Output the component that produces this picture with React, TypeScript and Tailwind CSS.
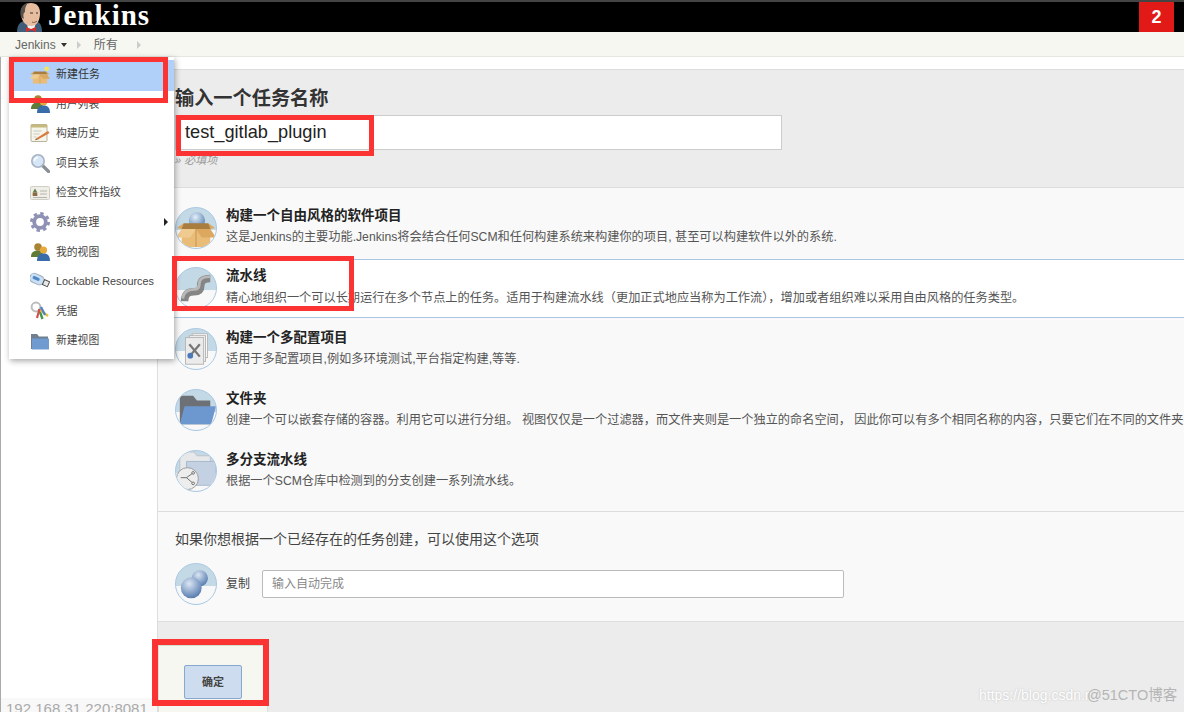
import type { ReactNode } from "react";

const FONT = "font-['Liberation_Sans','Noto_Sans_CJK_SC',sans-serif]";

const BoxIcon = ({ small }: { small?: boolean }) => (
  <svg viewBox="0 0 42 42" className="w-full h-full">
    {!small && (
      <>
        <defs>
          <radialGradient id="ball" cx="40%" cy="30%" r="70%">
            <stop offset="0" stopColor="#e4eef8" />
            <stop offset="1" stopColor="#5f88b8" />
          </radialGradient>
        </defs>
        <circle cx="22" cy="13" r="8.5" fill="url(#ball)" />
      </>
    )}
    {small && <circle cx="35" cy="10" r="5" fill="#f4e45f" />}
    <path d="M8 16h26l3 6H5z" fill="#a97c3f" />
    <path d="M6 22h30v19H6z" fill="#e9bc78" />
    <path d="M6 22L0 31h15l6-9z" fill="#f0cb90" />
    <path d="M36 22l6 9H27l-6-9z" fill="#dca75f" />
    <path d="M8 16L1 21l5 1zM34 16l7 5-5 1z" fill="#d9a860" />
    <path d="M21 22v19" stroke="#c8944c" />
  </svg>
);

const PeopleIcon = () => (
  <svg viewBox="0 0 20 20" className="w-full h-full">
    <circle cx="8" cy="5" r="3.8" fill="#a98434" />
    <path d="M1 15c0-5 3-6.5 7-6.5s5 2.5 5 6.5z" fill="#5f7b35" />
    <circle cx="13.5" cy="8" r="3.6" fill="#e7a83c" />
    <path d="M7 19c0-6 3-7.500 6.500-7.500S20 13 20 19z" fill="#3a6ca9" />
  </svg>
);

const HistoryIcon = () => (
  <svg viewBox="0 0 20 20" className="w-full h-full">
    <rect x="1" y="1.500" width="16" height="17" rx="1" fill="#f6f5ea" stroke="#b8b39a" />
    <rect x="1" y="1.500" width="16" height="3" fill="#c7b97d" />
    <path d="M3.500 8h8M3.500 11h6M3.500 14h3" stroke="#c9c9c9" />
    <path d="M6 15.500L18 8l1.500 2L8 16.500z" fill="#d9793f" />
    <path d="M6 15.500l2 1-3 .8z" fill="#7a5a38" />
  </svg>
);

const SearchIcon = () => (
  <svg viewBox="0 0 20 20" className="w-full h-full">
    <path d="M12.500 12.500l6 6" stroke="#8a8f96" strokeWidth="3.200" strokeLinecap="round" />
    <circle cx="8" cy="8" r="6.200" fill="#d7e6f6" stroke="#a5b4c4" strokeWidth="1.600" />
    <path d="M4.500 8a3.500 3.500 0 0 1 3.500-3.500" stroke="#fff" strokeWidth="1.400" fill="none" />
  </svg>
);

const FingerprintIcon = () => (
  <svg viewBox="0 0 20 20" className="w-full h-full">
    <rect x="0.500" y="3.500" width="19" height="13" rx="1" fill="#efeee7" stroke="#cfcfc8" />
    <path d="M5 5.500l2.300 4h-4.600z" fill="#5f7d45" />
    <rect x="2.700" y="9.500" width="4.600" height="3.500" fill="#8a6a3e" />
    <path d="M10 8h7M10 11h7M3 14.500h14" stroke="#b5b5ad" />
  </svg>
);

const GearIcon = () => (
  <svg viewBox="0 0 20 20" className="w-full h-full">
    <circle cx="10" cy="10" r="5.800" fill="none" stroke="#8f91b5" strokeWidth="3.800" />
    <circle
      cx="10"
      cy="10"
      r="8.600"
      fill="none"
      stroke="#8f91b5"
      strokeWidth="2.800"
      strokeDasharray="3.400 3.350"
    />
  </svg>
);

const UsbIcon = () => (
  <svg viewBox="0 0 22 20" className="w-full h-full">
    <g transform="rotate(24 11 10)">
      <rect x="-1" y="4.500" width="16" height="10" rx="4.500" fill="#c9dff3" stroke="#9aaabb" />
      <rect x="2" y="7.500" width="8" height="3.400" rx="1.400" fill="#4f87c9" />
      <rect x="15" y="6.500" width="6" height="6" fill="#e8e8e8" stroke="#444" />
    </g>
  </svg>
);

const KeysIcon = () => (
  <svg viewBox="0 0 20 20" className="w-full h-full">
    <circle cx="6" cy="6" r="4.400" fill="none" stroke="#bcbcbc" strokeWidth="2" />
    <path d="M9 8l3.500 10" stroke="#3f9a4b" strokeWidth="2.400" />
    <path d="M10 9l8 6" stroke="#e2c23b" strokeWidth="2.400" />
    <path d="M9.500 8L7 17" stroke="#d94c4c" strokeWidth="2.200" />
    <path d="M11 6l4 8" stroke="#4c7fd0" strokeWidth="2.200" />
  </svg>
);

const FolderIcon = () => (
  <svg viewBox="0 0 20 20" className="w-full h-full">
    <path d="M1 3h6l2 2.500h9V18H1z" fill="#6f7f90" />
    <path d="M2 7.500h17V18.500H2z" fill="#6f9bd1" />
  </svg>
);

const Disc = ({ children }: { children: ReactNode }) => (
  <div className="relative w-[42px] h-[42px] shrink-0 rounded-full border border-[#a8c8e4] overflow-hidden bg-[linear-gradient(#c4d9e6_0,#c4d9e6_55%,#f8f8f8_55%)]">
    {children}
  </div>
);

const PipeIcon = () => (
  <svg viewBox="0 0 42 42" className="w-full h-full">
    <path
      d="M9 35C9 27 13 25 19 25C25 25 26 22 26 18C26 13 30 11 36 11"
      fill="none"
      stroke="#858585"
      strokeWidth="8"
    />
    <path
      d="M7 32C8 25 13 22.500 19 22.500C24 22.500 24.500 19 24.500 16C24.500 11 30 9 36 9"
      fill="none"
      stroke="#b8b8b8"
      strokeWidth="3"
    />
  </svg>
);

const ConfigIcon = () => (
  <svg viewBox="0 0 42 42" className="w-full h-full">
    <rect x="17" y="5" width="16" height="25" fill="#fbfbfb" stroke="#b5b5b5" />
    <rect x="14" y="7" width="17" height="27" fill="#f5f5f5" stroke="#b5b5b5" />
    <rect x="10" y="9" width="19" height="28" fill="#ebebeb" stroke="#b5b5b5" />
    <path d="M14 16l11 13M25 16L14 29" stroke="#777" strokeWidth="2.400" />
    <circle cx="15" cy="28" r="3" fill="#4a78b8" />
  </svg>
);

const FolderDiscIcon = () => (
  <svg viewBox="0 0 42 42" className="w-full h-full">
    <path d="M4 6h14l4 5h14v25H4z" fill="#6d7074" />
    <path d="M9 17h33l-5 19H4z" fill="#6c98cf" />
  </svg>
);

const MultiBranchIcon = () => (
  <svg viewBox="0 0 42 42" className="w-full h-full">
    <path d="M4 1h15l3 4h14v26H4z" fill="#e6e8ea" stroke="#bcc2c8" />
    <path d="M11 11h31v25H11z" fill="#c3d1e2" stroke="#a5b7cb" />
    <circle cx="12" cy="29" r="11.500" fill="#ededed" stroke="#9b9b9b" />
    <path d="M5 28h6l7-5M11 28l7 6" fill="none" stroke="#6d6d6d" />
    <circle cx="18" cy="23" r="1.400" fill="#ededed" stroke="#6d6d6d" />
    <circle cx="18" cy="34" r="1.400" fill="#ededed" stroke="#6d6d6d" />
  </svg>
);

const SpheresIcon = () => (
  <svg viewBox="0 0 42 42" className="w-full h-full">
    <defs>
      <radialGradient id="sph" cx="40%" cy="30%" r="75%">
        <stop offset="0" stopColor="#dbe6f3" />
        <stop offset="1" stopColor="#5076ac" />
      </radialGradient>
    </defs>
    <circle cx="25" cy="15" r="8.500" fill="url(#sph)" />
    <circle cx="16" cy="25" r="11" fill="url(#sph)" />
  </svg>
);

const menu: { label: string; icon: ReactNode; arrow?: boolean }[] = [
  { label: "用户列表", icon: <PeopleIcon /> },
  { label: "构建历史", icon: <HistoryIcon /> },
  { label: "项目关系", icon: <SearchIcon /> },
  { label: "检查文件指纹", icon: <FingerprintIcon /> },
  { label: "系统管理", icon: <GearIcon />, arrow: true },
  { label: "我的视图", icon: <PeopleIcon /> },
  { label: "Lockable Resources", icon: <UsbIcon /> },
  { label: "凭据", icon: <KeysIcon /> },
  { label: "新建视图", icon: <FolderIcon /> },
];

const jobs: {
  title: string;
  desc: string;
  icon: ReactNode;
  selected?: boolean;
  row: string;
  text: string;
  gap: string;
}[] = [
  {
    title: "构建一个自由风格的软件项目",
    desc: "这是Jenkins的主要功能.Jenkins将会结合任何SCM和任何构建系统来构建你的项目, 甚至可以构建软件以外的系统.",
    icon: <BoxIcon />,
    row: "h-[71px] pt-[19px]",
    text: "mt-0",
    gap: "mt-[6px]",
  },
  {
    title: "流水线",
    desc: "精心地组织一个可以长期运行在多个节点上的任务。适用于构建流水线（更加正式地应当称为工作流），增加或者组织难以采用自由风格的任务类型。",
    icon: <PipeIcon />,
    selected: true,
    row: "h-[59px] pt-[7px]",
    text: "mt-0",
    gap: "mt-[7px]",
  },
  {
    title: "构建一个多配置项目",
    desc: "适用于多配置项目,例如多环境测试,平台指定构建,等等.",
    icon: <ConfigIcon />,
    row: "h-[61px] pt-[10px]",
    text: "mt-[1px]",
    gap: "mt-[6px]",
  },
  {
    title: "文件夹",
    desc: "创建一个可以嵌套存储的容器。利用它可以进行分组。 视图仅仅是一个过滤器，而文件夹则是一个独立的命名空间， 因此你可以有多个相同名称的内容，只要它们在不同的文件夹里即可。",
    icon: <FolderDiscIcon />,
    row: "h-[61px] pt-[10px]",
    text: "mt-[1px]",
    gap: "mt-[6px]",
  },
  {
    title: "多分支流水线",
    desc: "根据一个SCM仓库中检测到的分支创建一系列流水线。",
    icon: <MultiBranchIcon />,
    row: "h-[71px] pt-[10px]",
    text: "mt-[1px]",
    gap: "mt-[6px]",
  },
];

export default function App() {
  return (
    <div className={`relative w-[1184px] h-[712px] overflow-hidden bg-white text-[#333] ${FONT}`}>
      {/* header */}
      <div className="h-[32px] bg-black border-t-2 border-[#444] flex items-center justify-between pl-[15px] pr-[10px]">
        <div className="flex items-center gap-[3px]">
          <svg viewBox="0 0 30 30" className="w-[30px] h-[30px]">
            <path d="M2 30c0-8 4-11 9-11h7c6 0 9 3 9 11z" fill="#3f5c78" />
            <path d="M12 20h9l-2 8h-6z" fill="#f0f0f0" />
            <path d="M11 25l5 2 5-2v5l-5-2-5 2z" fill="#d12f2c" />
            <path d="M6 11C6 4 10 1 16 1s9 4 9 10c0 6-2 13-9 13-6 0-10-6-10-13z" fill="#e6bd9f" />
            <path d="M6 15C4 8 7 2 13 1c-3 3-3 7-3 9-2 1-2 4-1 7z" fill="#55504c" />
            <path d="M15 11h3M21 11h2" stroke="#333" strokeWidth="1.200" />
            <path d="M17 20c2 1 4 0 5-1" stroke="#8a5a48" fill="none" />
          </svg>
          <span className="font-['Liberation_Serif',serif] text-white text-[29px] font-bold leading-none tracking-[1px] -mt-[3px]">
            Jenkins
          </span>
        </div>
        <div className="w-[35px] h-[30px] bg-[#e11a17] text-white font-bold text-[18px] flex items-center justify-center">
          2
        </div>
      </div>

      {/* breadcrumb */}
      <div className="h-[25px] bg-[#f5f7f0] border-b border-[#e4e6df] flex items-center pt-[1px] pl-[15px] text-[12px] text-[#666]">
        <span>Jenkins</span>
        <span className="ml-[5px] border-x-[3.5px] border-x-transparent border-t-[4px] border-t-[#333]" />
        <span className="ml-[10px] border-y-[4px] border-y-transparent border-l-[4px] border-l-[#ccc]" />
        <span className="ml-[13px]">所有</span>
        <span className="ml-[19px] border-y-[4px] border-y-transparent border-l-[4px] border-l-[#ccc]" />
      </div>

      <div className="flex h-[655px]">
        {/* sidebar */}
        <div className="w-[158px] shrink-0 border-l border-[#aaa] border-r border-r-[#ddd] flex flex-col justify-end">
          <div className="h-[14px] overflow-hidden bg-[#f8f8f8] pl-[5px] pt-[2px] text-[15px] leading-[18px] text-[#aaa] whitespace-nowrap">
            192.168.31.220:8081
          </div>
        </div>

        {/* main */}
        <div className="flex-1 min-w-0 pt-[12px]">
          <div className="h-full bg-[#ececec] border-t border-[#ddd] flex flex-col">
            <div className="h-[117px] shrink-0 pl-[17px] pt-[17px]">
              <h1 className="text-[19.2px] leading-[23px] font-bold text-[#333]">输入一个任务名称</h1>
              <div className="mt-[5px] w-[607px] h-[35px] bg-white border border-[#ccc] pl-[9px] text-[18.2px] leading-[33px] text-[#222]">
                test_gitlab_plugin
              </div>
              <p className="mt-[3px] text-[11px] leading-[14px] italic text-[#999]">» 必填项</p>
            </div>

            <div className="h-[325px] shrink-0 bg-[#f9f9f9] border-y border-[#ddd] overflow-hidden">
              {jobs.map((job) => (
                <div
                  key={job.title}
                  className={`${job.row} flex items-start pl-[17px] whitespace-nowrap ${
                    job.selected ? "bg-white border-y border-[#a9c6e3]" : ""
                  }`}
                >
                  <Disc>{job.icon}</Disc>
                  <div className={`ml-[9px] ${job.text}`}>
                    <div className="text-[13.5px] leading-[17px] font-bold text-[#222]">{job.title}</div>
                    <div className={`${job.gap} text-[12.2px] leading-[15px] text-[#555]`}>{job.desc}</div>
                  </div>
                </div>
              ))}
            </div>

            <div className="h-[110px] shrink-0 bg-[#f9f9f9] border-b border-[#ddd] pl-[17px] pt-[18px]">
              <p className="text-[14px] leading-[18px] text-[#444]">如果你想根据一个已经存在的任务创建，可以使用这个选项</p>
              <div className="mt-[15px] flex items-center">
                <Disc>
                  <SpheresIcon />
                </Disc>
                <span className="ml-[9px] text-[12px] text-[#444]">复制</span>
                <div className="ml-[12px] w-[582px] h-[28px] bg-white border border-[#bbb] rounded-[2px] pl-[9px] text-[12px] leading-[26px] text-[#888]">
                  输入自动完成
                </div>
              </div>
            </div>

            <div className="flex-1 pt-[23px]">
              <div className="w-[110px] h-full bg-[#f5f7f0] border-t border-[#cfe0cf] border-x border-x-[#d8e4d8] pt-[19px] pl-[25px]">
                <button className="w-[58px] h-[34px] rounded-[2px] bg-[#cddcee] border border-[#87a9cf] text-[11px] font-bold text-[#444]">
                  确定
                </button>
              </div>
            </div>
          </div>
        </div>
      </div>

      {/* dropdown opened from the breadcrumb */}
      <div className="absolute left-[9px] top-[57px] w-[165px] h-[302px] bg-white shadow-[1px_2px_6px_rgba(0,0,0,0.35)] pt-[3px]">
        <div className="h-[31px] pb-[3px] bg-[#b0d0fa] flex items-center pl-[21px] text-[11px] text-[#333]">
          <span className="w-[20px] h-[20px] block">
            <BoxIcon small />
          </span>
          <span className="ml-[6px]">新建任务</span>
        </div>
        <div className="-mt-[2px]">
          {menu.map((m) => (
            <div key={m.label} className="relative h-[29.6px] flex items-center pl-[21px] text-[10.8px] text-[#444]">
              <span className="w-[20px] h-[20px] block shrink-0">{m.icon}</span>
              <span className="ml-[6px] whitespace-nowrap">{m.label}</span>
              {m.arrow && (
                <span className="absolute right-[6px] top-[11px] border-y-[4px] border-y-transparent border-l-[4px] border-l-[#222]" />
              )}
            </div>
          ))}
        </div>
      </div>

      {/* red annotation boxes */}
      <div className="absolute left-[9px] top-[57px] w-[159px] h-[46px] border-[5px] border-[#fb3333]" />
      <div className="absolute left-[176px] top-[115px] w-[198px] h-[41px] border-[5px] border-[#fb3333]" />
      <div className="absolute left-[172px] top-[256px] w-[182px] h-[55px] border-[5px] border-[#fb3333]" />
      <div className="absolute left-[152px] top-[639px] w-[117px] h-[67px] border-[6px] border-[#fb3333]" />

      {/* watermark */}
      <div className="absolute left-[979px] top-[687px] text-[14px] leading-[16px] text-white [text-shadow:0_0_2px_#bbb] whitespace-nowrap">
        https://blog.csdn.n
      </div>
      <div className="absolute left-[1087px] top-[687px] text-[14.5px] leading-[16px] text-[#b5b5b5] whitespace-nowrap">
        @51CTO博客
      </div>
    </div>
  );
}
